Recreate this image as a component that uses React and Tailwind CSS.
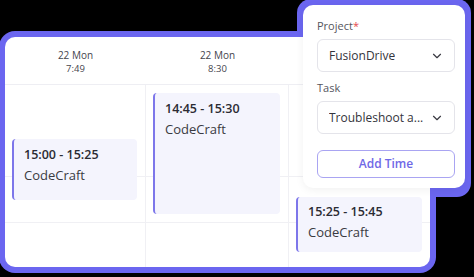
import { ChevronDown } from 'lucide-react';

// third column header sits under the popup, so it carries no text here
const columns = [
  { day: '22 Mon', time: '7:49' },
  { day: '22 Mon', time: '8:30' },
  { day: '', time: '' },
];

// events per column, top/height measured from the top of the body
const events = [
  [{ range: '15:00 - 15:25', project: 'CodeCraft', top: 54, height: 61, textTop: 8 }],
  [{ range: '14:45 - 15:30', project: 'CodeCraft', top: 8, height: 121, textTop: 8 }],
  [{ range: '15:25 - 15:45', project: 'CodeCraft', top: 112, height: 55, textTop: 7 }],
];

const EventCard = ({ ev }) => (
  <div
    className="absolute left-[7px] right-[8px] rounded-[4px] border-l-2 border-[#7d76ea] bg-[#f4f4fd] pl-[10px]"
    style={{ top: ev.top, height: ev.height, paddingTop: ev.textTop }}
  >
    <div className="text-[12.5px] leading-[16px] font-semibold text-[#2b2b33]">{ev.range}</div>
    <div className="mt-[3px] text-[13px] leading-[18px] text-[#3a3a42]">{ev.project}</div>
  </div>
);

const SelectBox = ({ value }) => (
  <div className="flex items-center justify-between h-[33px] w-[138px] rounded-[6px] border border-[#e4e4ea] bg-white pl-[11px] pr-[10px]">
    <span className="text-[12px] text-[#34343c] truncate">{value}</span>
    <ChevronDown className="w-[14px] h-[14px] text-[#3a3a42] shrink-0" strokeWidth={2} />
  </div>
);

export default function App() {
  return (
    <div
      className="relative w-[474px] h-[277px] overflow-hidden bg-black"
      style={{ fontFamily: '"Open Sans", "Noto Sans", sans-serif' }}
    >
      {/* purple outline behind the popup */}
      <div className="absolute left-[297px] top-[-1px] w-[174px] h-[198px] rounded-[14px] bg-[#6b66f0]" />

      {/* calendar card */}
      <div className="relative z-10 ml-[5px] mt-[37px] w-[425px] h-[230px] rounded-[10px] bg-white shadow-[0_0_0_6px_#6b66f0] overflow-hidden">
        <div className="grid grid-cols-[141px_143px_141px] h-[48px] border-b border-[#eeeef3]">
          {columns.map((c, i) => (
            <div key={i} className="flex flex-col items-center pt-[11px] text-[#45454d]">
              <span className="text-[10px] leading-[14px]">{c.day}</span>
              <span className="text-[9.5px] leading-[14px]">{c.time}</span>
            </div>
          ))}
        </div>
        <div className="grid grid-cols-[141px_143px_141px] h-[182px]">
          {events.map((col, i) => (
            <div key={i} className={`relative ${i < 2 ? 'border-r border-[#f0f0f4]' : ''}`}>
              <div className="h-[92px] border-b border-[#f0f0f4]" />
              <div className="h-[46px] border-b border-[#f0f0f4]" />
              {col.map((ev, j) => (
                <EventCard key={j} ev={ev} />
              ))}
            </div>
          ))}
        </div>
      </div>

      {/* add time popup */}
      <div className="absolute z-20 left-[303px] top-[5px] w-[162px] h-[183px] rounded-[10px] bg-white shadow-[0_2px_8px_rgba(0,0,0,0.06)] pl-[14px] pt-[14px]">
        <div className="text-[11px] leading-[14px] text-[#55555d]">
          Project<span className="text-[#e5484d]">*</span>
        </div>
        <div className="mt-[6px]">
          <SelectBox value="FusionDrive" />
        </div>
        <div className="mt-[9px] text-[11px] leading-[14px] text-[#55555d]">Task</div>
        <div className="mt-[6px]">
          <SelectBox value="Troubleshoot a..." />
        </div>
        <button className="mt-[16px] h-[28px] w-[138px] rounded-[6px] border border-[#a9a4f2] text-[12px] font-semibold text-[#6f68e6]">
          Add Time
        </button>
      </div>
    </div>
  );
}
